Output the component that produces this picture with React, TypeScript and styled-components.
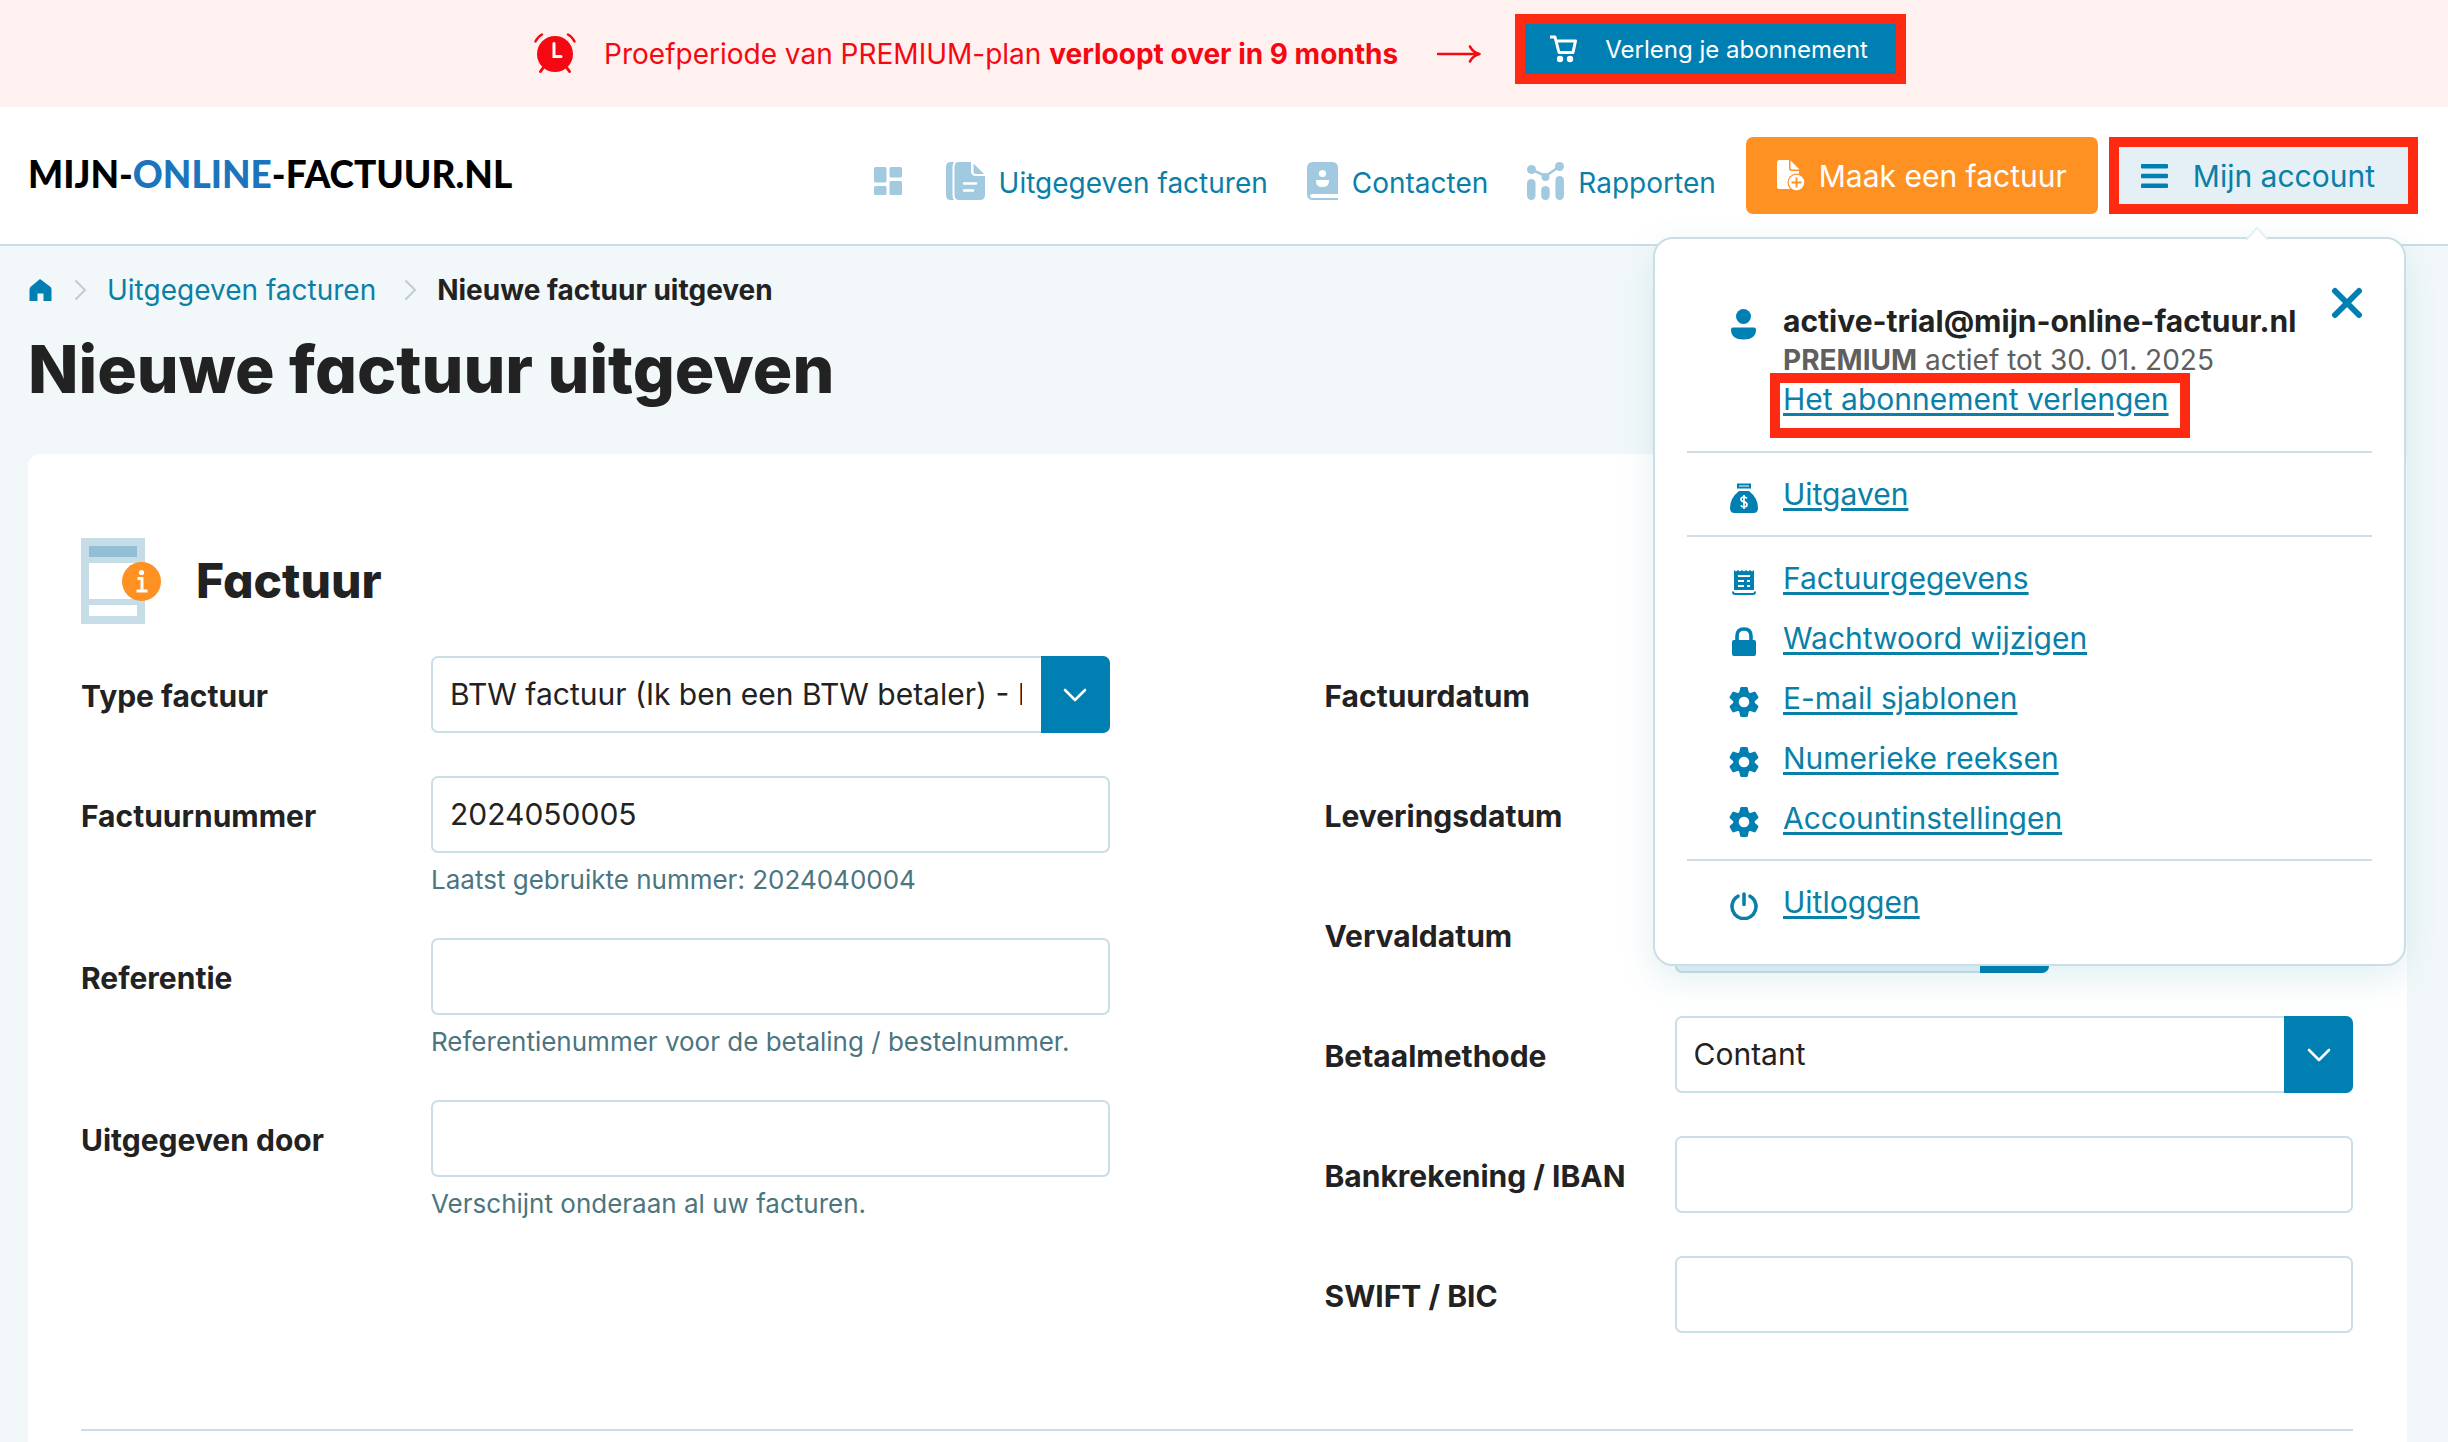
import React from "react";
import styled, { createGlobalStyle } from "styled-components";

const color = {
  blue: "#007fb2",
  link: "#0a7fa8",
  pale: "#a1cae1",
  line: "#c9dee6",
  ink: "#222222",
  hint: "#4b757f",
  orange: "#ff9122",
  mark: "#ff2a12",
  alarm: "#f60812",
};

const GlobalStyle = createGlobalStyle`
  *, *::before, *::after { box-sizing: border-box; }
  body { margin: 0; background: #f2f8f9; }
  body, input, select, button {
    font-family: Inter, "Liberation Sans", sans-serif;
    font-size: 28px;
    color: ${color.ink};
  }
  a { color: ${color.link}; text-decoration: none; }
  h1, h2, p { margin: 0; }
  svg { display: block; flex: none; }
`;

const Page = styled.div`
  min-height: 100vh;
  display: flex;
  flex-direction: column;
`;

/* Trial banner */
const Banner = styled.div`
  height: 107px;
  display: flex;
  align-items: center;
  justify-content: center;
  background: #fef1ef;
  color: ${color.alarm};
  padding-right: 8px;
`;

const BannerText = styled.p`
  margin: 0 39px 0 28px;
`;

const RenewButton = styled.button`
  display: flex;
  align-items: center;
  gap: 28px;
  height: 70px;
  margin: 0 0 9px 34px;
  padding: 0 28px 0 25px;
  border: 10px solid ${color.mark};
  background: ${color.blue};
  color: #fff;
  font-size: 24px;
`;

/* Header */
const Header = styled.header`
  display: flex;
  align-items: center;
  height: 139px;
  padding: 0 30px 0 28px;
  background: #fff;
  border-bottom: 2px solid ${color.line};
`;

const Logo = styled.a`
  margin-right: auto;
  font-family: Lato, sans-serif;
  font-weight: 900;
  font-size: 37px;
  line-height: 40px;
  padding-bottom: 4px;
  color: #000;
  span { color: #1c75bc; }
`;

const Nav = styled.nav`
  display: flex;
  align-items: center;
  gap: 39px;
  margin-right: 30px;
`;

const NavLink = styled.a`
  display: flex;
  align-items: center;
  gap: 14px;
  padding-top: 11px;
  line-height: 40px;
  &:first-child { margin-right: 5px; }
`;

const NavText = styled.span`
  padding-top: 3px;
`;

const CreateButton = styled.button`
  display: flex;
  align-items: center;
  gap: 14px;
  height: 77px;
  padding: 0 31px;
  border: 0;
  border-radius: 7px;
  background: ${color.orange};
  color: #fff;
  font-size: 30px;
`;

const Account = styled.div`
  position: relative;
  margin-left: 11px;
`;

const AccountButton = styled.button`
  display: flex;
  align-items: center;
  gap: 25px;
  height: 77px;
  padding: 0 33px 0 22px;
  border: 10px solid ${color.mark};
  background: #e4f0f5;
  color: ${color.link};
  font-size: 30px;
`;

/* Account menu */
const Menu = styled.div`
  position: absolute;
  z-index: 2;
  top: 100px;
  right: 12px;
  width: 753px;
  padding: 0 32px 21px;
  background: #fff;
  border: 2px solid ${color.line};
  border-radius: 20px;
  box-shadow: 0 12px 36px rgba(0, 120, 150, 0.12);
`;

const MenuTip = styled.svg`
  position: absolute;
  top: -12px;
  right: 135px;
`;

const CloseButton = styled.button`
  position: absolute;
  top: 48px;
  right: 41px;
  padding: 0;
  border: 0;
  background: none;
`;

const Profile = styled.div`
  display: flex;
  gap: 26px;
  padding: 63px 0 32px 42px;
  line-height: 39px;
  font-size: 30px;
`;

const IconSlot = styled.span`
  width: 28px;
  display: flex;
  justify-content: center;
  padding-top: 7px;
`;

const Plan = styled.p`
  font-size: 28px;
  color: #5f5f5f;
`;

const MenuLink = styled.a`
  font-size: 30px;
  text-decoration: underline;
  text-decoration-thickness: 3px;
  text-underline-offset: 3px;
`;

const Marked = styled.span`
  position: relative;
  display: inline-block;
  &::after {
    content: "";
    position: absolute;
    inset: -7px -21px -19px -13px;
    border: 10px solid ${color.mark};
    pointer-events: none;
  }
`;

const MenuGroup = styled.ul`
  list-style: none;
  margin: 0;
  padding: 11px 0;
  border-top: 2px solid #cfdde4;
`;

const MenuItem = styled.li`
  display: flex;
  align-items: center;
  gap: 25px;
  height: 60px;
  padding-left: 43px;
`;

/* Content */
const Main = styled.main`
  flex: 1;
  display: flex;
  flex-direction: column;
  padding: 24px 41px 0 28px;
`;

const Breadcrumbs = styled.nav`
  display: flex;
  align-items: center;
  line-height: 40px;
  a + svg { margin-left: 22px; }
`;

const Crumb = styled.a`
  margin: 0 6px 0 20px;
`;

const Current = styled.strong`
  margin-left: 20px;
`;

const Title = styled.h1`
  margin: 21px 0 47px;
  font-size: 66px;
  line-height: 76px;
  font-weight: 800;
  font-feature-settings: "cv11";
`;

const Card = styled.section`
  flex: 1;
  padding: 84px 54px 0 53px;
  background: #fff;
  border-radius: 12px 12px 0 0;
`;

const CardHead = styled.div`
  display: flex;
  align-items: center;
  gap: 35px;
  margin-bottom: 32px;
`;

const CardTitle = styled.h2`
  font-size: 48px;
  line-height: 56px;
  font-weight: 800;
  font-feature-settings: "cv11";
`;

const Columns = styled.div`
  display: grid;
  grid-template-columns: 1fr 1fr;
  gap: 215px;
  padding-bottom: 96px;
  border-bottom: 2px solid ${color.line};
`;

const Column = styled.div`
  display: flex;
  flex-direction: column;
  gap: 43px;
`;

const Row = styled.div`
  display: grid;
  grid-template-columns: 350px 1fr;
  align-items: start;
`;

const Label = styled.label`
  padding-top: 20px;
  line-height: 40px;
  font-size: 30px;
  font-weight: 700;
`;

const Input = styled.input`
  display: block;
  width: 100%;
  height: 77px;
  padding: 0 17px 2px;
  border: 2px solid ${color.line};
  border-radius: 7px;
  background: #fff;
  font-size: 30px;
  outline: none;
`;

const Hint = styled.p`
  margin-top: 11px;
  font-size: 26px;
  line-height: 31px;
  color: ${color.hint};
`;

const SelectWrap = styled.div`
  display: grid;
  grid-template-columns: 1fr 69px;
`;

const Select = styled.select`
  grid-area: 1 / 1 / 2 / 3;
  width: 100%;
  height: 77px;
  padding: 0 86px 2px 17px;
  border: 2px solid ${color.line};
  border-radius: 7px;
  background: #fff;
  font-size: 30px;
  appearance: none;
  text-overflow: clip;
`;

const SelectArrow = styled.span`
  grid-area: 1 / 2;
  display: grid;
  place-items: center;
  border-radius: 0 7px 7px 0;
  background: ${color.blue};
  pointer-events: none;
`;

const DateWrap = styled.div`
  display: flex;
  width: 374px;
`;

const DateInput = styled(Input)`
  flex: 1;
  min-width: 0;
  border-right: 0;
  border-radius: 7px 0 0 7px;
  background: #e8f3fb;
`;

const DateButton = styled.button`
  width: 69px;
  border: 0;
  border-radius: 0 7px 7px 0;
  background: ${color.blue};
`;

/* Icons */
const AlarmIcon = () => (
  <svg width="42" height="42" viewBox="0 0 42 42" fill="none" stroke={color.alarm} strokeLinecap="round">
    <circle cx="21" cy="21" r="18" fill={color.alarm} stroke="none" />
    <path d="M1.500 8.500Q4 3.500 8 1.500M40.500 8.500Q38 3.500 34 1.500" strokeWidth="2.500" />
    <path d="M9 35l-2.500 3.500M33 35l2.500 3.500" strokeWidth="3" />
    <path d="M20 10.500v13h7" stroke="#fff" strokeWidth="3" />
  </svg>
);

const LongArrow = () => (
  <svg width="44" height="18" viewBox="0 0 44 18" fill="none" stroke={color.alarm} strokeWidth="2.600" strokeLinecap="round" strokeLinejoin="round">
    <path d="M1 9h41M33 1.500Q35.500 7 42.500 9Q35.500 11 33 16.500" />
  </svg>
);

const CartIcon = () => (
  <svg width="27" height="28" viewBox="0 0 27 28" fill="none" stroke="#fff" strokeWidth="3" strokeLinejoin="round">
    <path d="M0 2h5l4 15.500h14L25.500 6H6.500" />
    <circle cx="10" cy="24" r="3.200" fill="#fff" stroke="none" />
    <circle cx="20" cy="24" r="3.200" fill="#fff" stroke="none" />
  </svg>
);

const DashboardIcon = () => (
  <svg width="28" height="28" viewBox="0 0 28 28" fill={color.pale}>
    <rect width="12.500" height="15.500" rx="1.500" />
    <rect x="15.500" width="12.500" height="10.500" rx="1.500" />
    <rect y="19" width="12.500" height="9" rx="1.500" />
    <rect x="15.500" y="14" width="12.500" height="14" rx="1.500" />
  </svg>
);

const DocumentsIcon = () => (
  <svg width="39" height="38" viewBox="0 0 39 38" fill={color.pale}>
    <path d="M8 0H5Q0 0 0 5v28q0 5 5 5h3Q6.500 36 6.500 33V5Q6.500 2 8 0z" />
    <path d="M13 0h12v9q0 5 5 5h9v19q0 5-5 5H13q-4.500 0-4.500-5V5Q8.500 0 13 0z" />
    <path d="M27.500 1.500L38 12h-8q-2.500 0-2.500-2.500z" />
    <path d="M18 21.500h12M18 28.500h9" stroke="#fff" strokeWidth="2.500" strokeLinecap="round" />
  </svg>
);

const ContactsIcon = () => (
  <svg width="31" height="38" viewBox="0 0 31 38">
    <path d="M6 0h19q6 0 6 6v26H6q-3 0-3 2t3 2h25v2H6q-6 0-6-6V6q0-6 6-6z" fill={color.pale} />
    <circle cx="15.500" cy="11.500" r="3.600" fill="#fff" />
    <path d="M9 18h13v1q0 6-6.500 6T9 19z" fill="#fff" />
  </svg>
);

const ReportsIcon = () => (
  <svg width="37" height="38" viewBox="0 0 37 38" fill={color.pale}>
    <circle cx="4.500" cy="7.500" r="4.500" />
    <circle cx="18.500" cy="15" r="4" />
    <circle cx="32.500" cy="4.500" r="4.500" />
    <path d="M4.500 7.500l14 6.500 14-9.500" fill="none" stroke={color.pale} strokeWidth="2.500" />
    <rect y="17" width="8.500" height="21" rx="4.200" />
    <rect x="14.200" y="24" width="8.500" height="14" rx="4.200" />
    <rect x="28.400" y="14" width="8.500" height="24" rx="4.200" />
  </svg>
);

const NewInvoiceIcon = () => (
  <svg width="28" height="31" viewBox="0 0 28 31" fill="#fff">
    <path d="M2.500 0h9.500v9q0 2 2 2h8v18H2.500Q0 29 0 26.500v-24Q0 0 2.500 0z" />
    <path d="M13.500.500l9 9h-8q-1 0-1-1z" />
    <circle cx="19.500" cy="22.500" r="9" fill={color.orange} />
    <circle cx="19.500" cy="22.500" r="7.800" />
    <path d="M19.500 17.500v10M14.500 22.500h10" stroke={color.orange} strokeWidth="1.800" />
  </svg>
);

const BurgerIcon = () => (
  <svg width="27" height="24" viewBox="0 0 27 24" fill={color.blue}>
    <rect width="27" height="4.500" rx="1" />
    <rect y="9.700" width="27" height="4.500" rx="1" />
    <rect y="19.400" width="27" height="4.500" rx="1" />
  </svg>
);

const CloseIcon = () => (
  <svg width="32" height="32" viewBox="0 0 32 32" stroke={color.blue} strokeWidth="6" strokeLinecap="round">
    <path d="M4 4l24 24M28 4L4 28" />
  </svg>
);

const UserIcon = () => (
  <svg width="25" height="31" viewBox="0 0 25 31" fill={color.blue}>
    <circle cx="12.500" cy="7.500" r="7.500" />
    <path d="M2 18.500h21q2 0 2 2 0 10-12.500 10T0 20.500q0-2 2-2z" />
  </svg>
);

const MoneyIcon = () => (
  <svg width="28" height="30" viewBox="0 0 28 30">
    <path d="M8 1.500h12v3H8z" fill="none" stroke={color.blue} strokeWidth="2" />
    <path d="M9 8h10Q28 15 28 25q0 5-4.500 5h-19Q0 30 0 25 0 15 9 8z" fill={color.blue} />
    <path d="M17 15.500q-1-1.500-3-1.500-3 0-3 2.300 0 2 3 2.600t3 2.700q0 2.400-3 2.400-2.200 0-3.200-1.600M14 12v14" fill="none" stroke="#fff" strokeWidth="1.700" />
  </svg>
);

const ReceiptIcon = () => (
  <svg width="24" height="26" viewBox="0 0 24 26">
    <path d="M2 1l2 1.500L6 1l2 1.500L10 1l2 1.500L14 1l2 1.500L18 1l2 1.500L22 1v20H2z" fill={color.blue} />
    <path d="M1 22.500q0 2.500 2 2.500h18q2 0 2-2.500" fill="none" stroke={color.blue} strokeWidth="2" />
    <path d="M6 7h12M6 12h6M6 17h6M15 12h3M15 17h3" stroke="#fff" strokeWidth="2" />
  </svg>
);

const LockIcon = () => (
  <svg width="24" height="29" viewBox="0 0 24 29">
    <path d="M5 14V9q0-7 7-7t7 7v5" fill="none" stroke={color.blue} strokeWidth="3.600" />
    <rect y="13" width="24" height="16" rx="2" fill={color.blue} />
  </svg>
);

const GearIcon = () => (
  <svg width="30" height="30" viewBox="-15 -15 30 30">
    <circle r="8" fill="none" stroke={color.blue} strokeWidth="5.400" />
    {[0, 60, 120, 180, 240, 300].map((a) => (
      <path key={a} d="M-5-8.500l1.200-5.500q.2-1 1.200-1h5.200q1 0 1.200 1L5-8.500z" fill={color.blue} transform={`rotate(${a})`} />
    ))}
  </svg>
);

const PowerIcon = () => (
  <svg width="28" height="28" viewBox="0 0 28 28" fill="none" stroke={color.link} strokeWidth="3.600" strokeLinecap="round">
    <path d="M8 4.200a12 12 0 1 0 12 0M14 2v10.500" />
  </svg>
);

const HomeIcon = () => (
  <svg width="24" height="22" viewBox="0 0 24 22" fill={color.blue}>
    <path d="M12 0l10 7.500q1.500 1 1.500 3V22h-8v-7.500h-6V22h-8V10.500q0-2 1.500-3z" />
  </svg>
);

const CrumbChevron = () => (
  <svg width="13" height="22" viewBox="0 0 13 22" fill="none" stroke="#c3cbce" strokeWidth="2">
    <path d="M1.500 1.500L11 11l-9.500 9.500" />
  </svg>
);

const DownIcon = () => (
  <svg width="24" height="14" viewBox="0 0 24 14" fill="none" stroke="#fff" strokeWidth="2.600" strokeLinecap="round" strokeLinejoin="round">
    <path d="M2 2l10 10L22 2" />
  </svg>
);

const InvoiceInfoIcon = () => (
  <svg width="80" height="86" viewBox="0 0 80 86">
    <rect width="64" height="86" fill="#c6dde8" />
    <rect x="8" y="8" width="48" height="11" fill="#93bfd6" />
    <rect x="8" y="25" width="48" height="36" fill="#fff" />
    <rect x="8" y="67" width="48" height="11" fill="#fff" />
    <circle cx="60.500" cy="43.500" r="19.500" fill={color.orange} />
    <circle cx="60.500" cy="34.500" r="2.600" fill="#fff" />
    <path d="M56.500 40.500h4.500v12M55.500 53h11" fill="none" stroke="#fff" strokeWidth="3" />
  </svg>
);

const settings = [
  { text: "Factuurgegevens", Icon: ReceiptIcon },
  { text: "Wachtwoord wijzigen", Icon: LockIcon },
  { text: "E-mail sjablonen", Icon: GearIcon },
  { text: "Numerieke reeksen", Icon: GearIcon },
  { text: "Accountinstellingen", Icon: GearIcon },
];

const menuGroups = [
  [{ text: "Uitgaven", Icon: MoneyIcon }],
  settings,
  [{ text: "Uitloggen", Icon: PowerIcon }],
];

type FieldProps = { id: string; label: string; children: React.ReactNode };

const Field = ({ id, label, children }: FieldProps) => (
  <Row>
    <Label htmlFor={id}>{label}</Label>
    <div>{children}</div>
  </Row>
);

const TextField = ({ id, label, value = "", hint }: { id: string; label: string; value?: string; hint?: string }) => (
  <Field id={id} label={label}>
    <Input id={id} type="text" defaultValue={value} />
    {hint && <Hint>{hint}</Hint>}
  </Field>
);

const SelectField = ({ id, label, option }: { id: string; label: string; option: string }) => (
  <Field id={id} label={label}>
    <SelectWrap>
      <Select id={id}>
        <option>{option}</option>
      </Select>
      <SelectArrow>
        <DownIcon />
      </SelectArrow>
    </SelectWrap>
  </Field>
);

const DateField = ({ id, label }: { id: string; label: string }) => (
  <Field id={id} label={label}>
    <DateWrap>
      <DateInput id={id} type="text" />
      <DateButton type="button" />
    </DateWrap>
  </Field>
);

const AccountMenu = () => (
  <Menu>
    <MenuTip width="24" height="14" viewBox="0 0 24 14">
      <path d="M1 13L12 1l11 12" fill="#fff" stroke="#e6eff2" strokeWidth="2" />
      <path d="M2 14L12 3l10 11z" fill="#fff" />
    </MenuTip>
    <CloseButton type="button">
      <CloseIcon />
    </CloseButton>
    <Profile>
      <IconSlot>
        <UserIcon />
      </IconSlot>
      <div>
        <strong>active-trial@mijn-online-factuur.nl</strong>
        <Plan>
          <strong>PREMIUM</strong> actief tot 30. 01. 2025
        </Plan>
        <Marked>
          <MenuLink href="#verlengen">Het abonnement verlengen</MenuLink>
        </Marked>
      </div>
    </Profile>
    {menuGroups.map((group, i) => (
      <MenuGroup key={i}>
        {group.map(({ text, Icon }) => (
          <MenuItem key={text}>
            <IconSlot>
              <Icon />
            </IconSlot>
            <MenuLink href="#menu">{text}</MenuLink>
          </MenuItem>
        ))}
      </MenuGroup>
    ))}
  </Menu>
);

export default function App() {
  return (
    <Page>
      <GlobalStyle />
      <Banner>
        <AlarmIcon />
        <BannerText>
          Proefperiode van PREMIUM-plan <strong>verloopt over in 9 months</strong>
        </BannerText>
        <LongArrow />
        <RenewButton type="button">
          <CartIcon />
          Verleng je abonnement
        </RenewButton>
      </Banner>
      <Header>
        <Logo href="#home">
          MIJN-<span>ONLINE</span>-FACTUUR.NL
        </Logo>
        <Nav>
          <NavLink href="#dashboard">
            <DashboardIcon />
          </NavLink>
          <NavLink href="#facturen">
            <DocumentsIcon />
            <NavText>Uitgegeven facturen</NavText>
          </NavLink>
          <NavLink href="#contacten">
            <ContactsIcon />
            <NavText>Contacten</NavText>
          </NavLink>
          <NavLink href="#rapporten">
            <ReportsIcon />
            <NavText>Rapporten</NavText>
          </NavLink>
        </Nav>
        <CreateButton type="button">
          <NewInvoiceIcon />
          Maak een factuur
        </CreateButton>
        <Account>
          <AccountButton type="button">
            <BurgerIcon />
            Mijn account
          </AccountButton>
          <AccountMenu />
        </Account>
      </Header>
      <Main>
        <Breadcrumbs>
          <a href="#home">
            <HomeIcon />
          </a>
          <CrumbChevron />
          <Crumb href="#facturen">Uitgegeven facturen</Crumb>
          <CrumbChevron />
          <Current>Nieuwe factuur uitgeven</Current>
        </Breadcrumbs>
        <Title>Nieuwe factuur uitgeven</Title>
        <Card>
          <CardHead>
            <InvoiceInfoIcon />
            <CardTitle>Factuur</CardTitle>
          </CardHead>
          <Columns>
            <Column>
              <SelectField id="type" label="Type factuur" option="BTW factuur (Ik ben een BTW betaler) - I" />
              <TextField id="nummer" label="Factuurnummer" value="2024050005" hint="Laatst gebruikte nummer: 2024040004" />
              <TextField id="referentie" label="Referentie" hint="Referentienummer voor de betaling / bestelnummer." />
              <TextField id="door" label="Uitgegeven door" hint="Verschijnt onderaan al uw facturen." />
            </Column>
            <Column>
              <DateField id="factuurdatum" label="Factuurdatum" />
              <DateField id="leveringsdatum" label="Leveringsdatum" />
              <DateField id="vervaldatum" label="Vervaldatum" />
              <SelectField id="betaalmethode" label="Betaalmethode" option="Contant" />
              <TextField id="iban" label="Bankrekening / IBAN" />
              <TextField id="bic" label="SWIFT / BIC" />
            </Column>
          </Columns>
        </Card>
      </Main>
    </Page>
  );
}
